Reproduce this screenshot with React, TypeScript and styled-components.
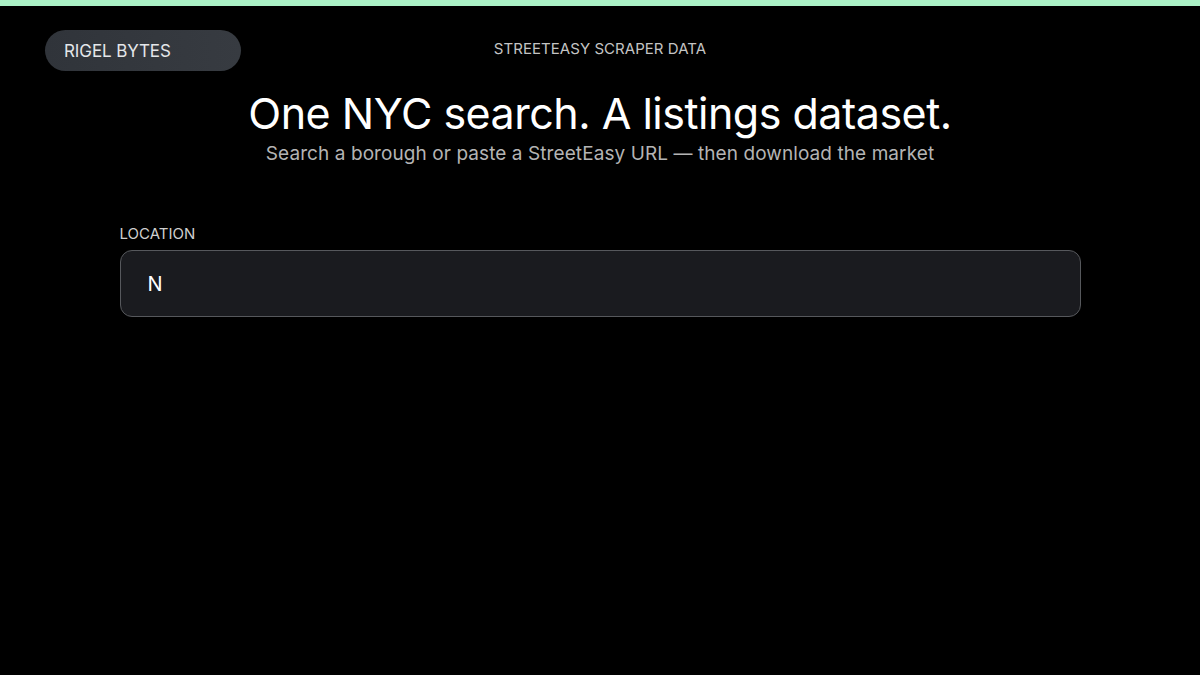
import styled, { createGlobalStyle } from 'styled-components';

const GlobalStyle = createGlobalStyle`
  html, body {
    margin: 0;
    padding: 0;
    background: #000;
  }
  body {
    font-family: Inter, 'Noto Sans', sans-serif;
    color: #fff;
  }
`;

function App() {
  return (
    <>
      <GlobalStyle />
      <Page>
        <TopStripe />
        <Header>
          <Brand>RIGEL BYTES</Brand>
          <Eyebrow>STREETEASY SCRAPER DATA</Eyebrow>
          <span />
        </Header>
        <Hero>
          <Title>One NYC search. A listings dataset.</Title>
          <Subtitle>Search a borough or paste a StreetEasy URL — then download the market</Subtitle>
        </Hero>
        <Form>
          <FieldLabel htmlFor='location'>LOCATION</FieldLabel>
          <LocationInput id='location' defaultValue='N' />
        </Form>
      </Page>
    </>
  );
}

export default App;

const Page = styled.div`
  min-height: 675px;
  background: #000;
`;

const TopStripe = styled.div`
  height: 6px;
  background: #abf1c6;
`;

const Header = styled.header`
  display: grid;
  grid-template-columns: 1fr auto 1fr;
  align-items: start;
  padding: 24px 45px 0;
`;

const Brand = styled.div`
  justify-self: start;
  width: 196px;
  box-sizing: border-box;
  height: 41px;
  display: flex;
  align-items: center;
  padding: 1px 0 0 19px;
  border-radius: 999px;
  background: linear-gradient(90deg, #30343a 0%, #373b41 100%);
  color: #e4e6e9;
  font-size: 17px;
  letter-spacing: -0.1px;
`;

const Eyebrow = styled.div`
  padding-top: 9px;
  font-size: 15px;
  color: #c4c4c4;
  letter-spacing: 0.05px;
`;

const Hero = styled.section`
  display: flex;
  flex-direction: column;
  align-items: center;
  margin-top: 19px;
`;

const Title = styled.h1`
  margin: 0;
  font-size: 43px;
  font-weight: 400;
  line-height: 46px;
  letter-spacing: -0.5px;
  color: #fff;
`;

const Subtitle = styled.p`
  margin: 6px 0 0;
  font-size: 19px;
  line-height: 24px;
  letter-spacing: 0.08px;
  color: #b4b4b4;
`;

const Form = styled.div`
  width: 961px;
  margin: 59px auto 0;
  display: flex;
  flex-direction: column;
  gap: 7px;
`;

const FieldLabel = styled.label`
  font-size: 15px;
  line-height: 18px;
  color: #cfcfcf;
`;

const LocationInput = styled.input`
  box-sizing: border-box;
  height: 67px;
  width: 100%;
  padding: 0 27px;
  background: #1a1b1f;
  border: 1px solid #56585c;
  border-radius: 12px;
  color: #fff;
  font-family: inherit;
  font-size: 20px;
  outline: none;
`;
